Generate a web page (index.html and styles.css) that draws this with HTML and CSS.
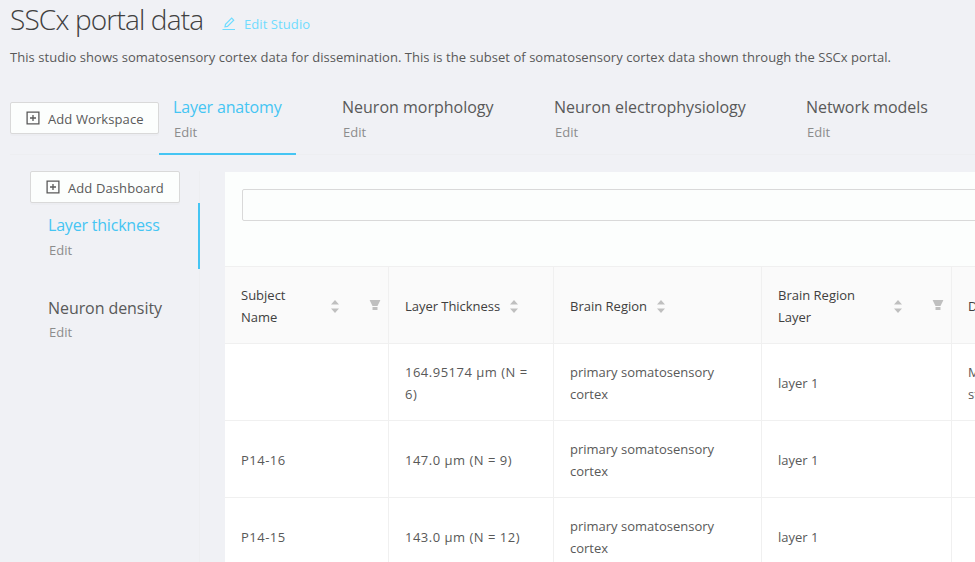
FILE: index.html
```html
<!DOCTYPE html>
<html lang="en">
<head>
<meta charset="utf-8">
<title>SSCx portal data</title>
<link rel="stylesheet" href="styles.css">
</head>
<body>
<svg width="0" height="0" class="defs">
  <symbol id="plus" viewBox="0 0 14 14"><path d="M1.100 1.100h11.800v11.800H1.100zM7 4v6M4 7h6" fill="none" stroke="currentColor" stroke-width="1.300"/></symbol>
  <symbol id="sort" viewBox="0 0 8 13"><path d="M4 0l4 4.600H0zM4 13l4-4.600H0z" fill="currentColor"/></symbol>
  <symbol id="filter" viewBox="0 0 12 11"><path d="M.9 0h10.200q.3.200 0 .8L8.500 6h-5L.9.800Q.6.200.9 0zM3.500 7h5v2.700q0 .4-.4.400H3.900q-.4 0-.4-.4z" fill="currentColor"/></symbol>
</svg>
<header class="head">
  <h1>SSCx portal data</h1>
  <button class="edit-studio"><svg width="14" height="14" viewBox="0 0 14 14" fill="none" stroke="currentColor" stroke-width="1.200"><path d="M.5 12.500h12.500M3 9.800l.5-2.400L9.700 1.200l2 2-6.200 6.200z"/></svg><span>Edit Studio</span></button>
</header>
<p class="desc">This studio shows somatosensory cortex data for dissemination. This is the subset of somatosensory cortex data shown through the SSCx portal.</p>
<nav class="workspaces">
  <button class="add"><svg width="14" height="14"><use href="#plus"/></svg><span>Add Workspace</span></button>
  <div class="tab active t1"><span class="name">Layer anatomy</span><span class="edit">Edit</span></div>
  <div class="tab t2"><span class="name">Neuron morphology</span><span class="edit">Edit</span></div>
  <div class="tab t3"><span class="name">Neuron electrophysiology</span><span class="edit">Edit</span></div>
  <div class="tab t4"><span class="name">Network models</span><span class="edit">Edit</span></div>
</nav>
<main>
  <aside>
    <button class="add dash"><svg width="14" height="14"><use href="#plus"/></svg><span>Add Dashboard</span></button>
    <div class="side active"><span class="name d1">Layer thickness</span><span class="edit">Edit</span></div>
    <div class="side"><span class="name d2">Neuron density</span><span class="edit e2">Edit</span></div>
  </aside>
  <section class="panel">
    <input class="search" aria-label="Search">
    <div class="table">
      <div class="row th">
        <div class="cell"><span class="grow">Subject<br>Name</span><svg class="sort" width="8" height="13"><use href="#sort"/></svg><svg class="filter" width="12" height="11"><use href="#filter"/></svg></div>
        <div class="cell"><span class="thick">Layer Thickness</span><svg class="sort" width="8" height="13"><use href="#sort"/></svg></div>
        <div class="cell"><span>Brain Region</span><svg class="sort" width="8" height="13"><use href="#sort"/></svg></div>
        <div class="cell"><span class="grow">Brain Region<br>Layer</span><svg class="sort" width="8" height="13"><use href="#sort"/></svg><svg class="filter" width="12" height="11"><use href="#filter"/></svg></div>
        <div class="cell">D</div>
      </div>
      <div class="row">
        <div class="cell"></div><div class="cell num">164.95174 μm (N =<br>6)</div><div class="cell region">primary somatosensory<br>cortex</div><div class="cell">layer 1</div><div class="cell">M<br>st</div>
      </div>
      <div class="row">
        <div class="cell num">P14-16</div><div class="cell num">147.0 μm (N = 9)</div><div class="cell region">primary somatosensory<br>cortex</div><div class="cell">layer 1</div><div class="cell"></div>
      </div>
      <div class="row">
        <div class="cell num">P14-15</div><div class="cell num">143.0 μm (N = 12)</div><div class="cell region">primary somatosensory<br>cortex</div><div class="cell">layer 1</div><div class="cell"></div>
      </div>
    </div>
  </section>
</main>
</body>
</html>
```
FILE: styles.css
```css
* { box-sizing: border-box; }
html { overflow: hidden; }
body { margin: 0; width: 975px; height: 562px; overflow: hidden; background: #f0f1f5; color: #595959; font: 13px/22px "Open Sans", "Noto Sans", sans-serif; white-space: nowrap; }
.defs { display: none; }
svg { flex: none; }
button { font: inherit; cursor: pointer; }
.head { display: flex; height: 44px; padding-left: 10px; }
h1 { width: 212px; margin: 0; font-size: 28px; line-height: 38px; font-weight: 300; letter-spacing: -.84px; color: #404040; }
.edit-studio { display: flex; align-items: center; gap: 8px; height: 22px; margin-top: 13px; padding: 0; border: 0; background: none; color: #6fdcff; letter-spacing: .08px; }
.desc { margin: 2px 0 0 10px; height: 42px; letter-spacing: .045px; }
.workspaces { display: flex; height: 67px; margin-left: 10px; border-bottom: 1px solid #edeef1; }
.add { display: flex; align-items: center; gap: 8px; width: 149px; height: 32px; margin-top: 14px; padding: 0 0 0 15px; border: 1px solid #d9d9d9; border-radius: 2px; background: #fcfefd; color: #595959; box-shadow: 0 2px 0 rgba(0,0,0,.015); letter-spacing: .1px; flex: none; }
.add span { padding-top: 2px; }
.tab { display: flex; flex-direction: column; flex: none; height: 67px; padding: 7px 0 0 14px; border-bottom: 2px solid transparent; }
.tab.t1 { width: 137px; margin-right: 32px; }
.t1 .name { letter-spacing: -.17px; }
.t2 { width: 212px; }
.t3 { width: 252px; }
.t4 { width: 150px; }
.t4 .name { letter-spacing: -.07px; }
.name { font-size: 16px; line-height: 24px; }
.d1 { letter-spacing: -.2px; }
.d2 { letter-spacing: -.07px; }
.edit { color: #8c8c8c; padding: 2px 0 0 1px; }
.edit.e2 { padding-top: 1px; }
.active .name { color: #45c5f3; }
.tab.active { border-bottom-color: #45c5f3; }
main { display: flex; height: 407px; padding: 16px 0 0 30px; }
aside { width: 170px; margin-right: 25px; border-right: 1px solid #edeef1; flex: none; }
.dash { width: 150px; margin: 0; }
.side { display: flex; flex-direction: column; height: 66px; margin: 0 -1px 17px 0; padding: 10px 0 0 18px; border-right: 2px solid transparent; }
.side.active { border-right-color: #45c5f3; }
.panel { flex: none; width: 750px; overflow: hidden; margin-top: 1px; background: #fcfefd; }
.search { display: block; width: 850px; height: 32px; margin: 17px 0 45px 17px; border: 1px solid #d9d9d9; border-radius: 2px; background: #fcfefd; }
.table { border-top: 1px solid #f0f0f0; width: 900px; }
.row { display: grid; grid-template-columns: 164px 165px 208px 190px 173px; height: 77px; background: #fff; }
.th { background: #fafafa; color: #404040; }
.cell { display: flex; align-items: center; padding: 1px 8px 0 16px; border-right: 1px solid #f0f0f0; border-bottom: 1px solid #f0f0f0; }
.num { letter-spacing: .5px; }
.thick { letter-spacing: -.04px; }
.sort { margin: 2px 0 0 9.500px; color: #bfbfbf; }
.filter { margin: 0 -.5px 1px 30px; color: #bfbfbf; }
.grow { flex: 1; }
```
